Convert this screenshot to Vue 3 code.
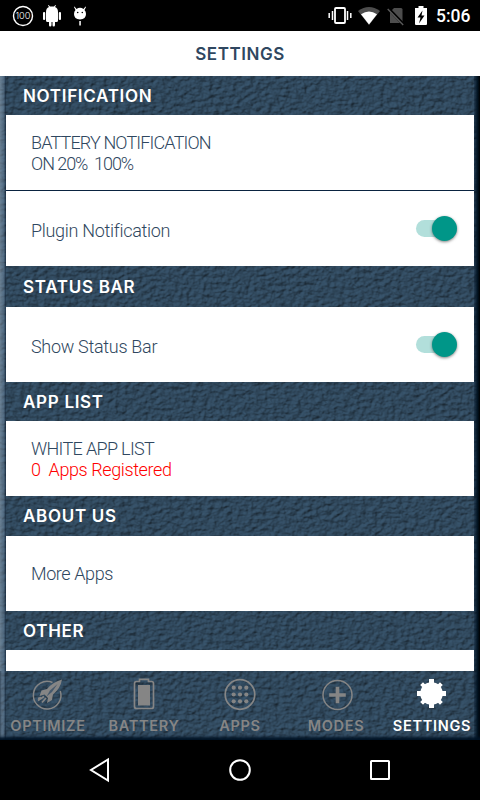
<script setup>
import { ref } from 'vue'

const activeTab = ref('SETTINGS')

const sections = ref([
  {
    title: 'NOTIFICATION',
    headHeight: 39,
    rows: [
      { id: 'battery', lines: ['BATTERY NOTIFICATION', 'ON 20%  100%'] },
      { id: 'plugin', lines: ['Plugin Notification'], toggle: true, on: true }
    ]
  },
  {
    title: 'STATUS BAR',
    headHeight: 41,
    rows: [{ id: 'status', lines: ['Show Status Bar'], toggle: true, on: true }]
  },
  {
    title: 'APP LIST',
    headHeight: 39,
    rows: [{ id: 'white', lines: ['WHITE APP LIST', '0  Apps Registered'], alert: true }]
  },
  {
    title: 'ABOUT US',
    headHeight: 40,
    rows: [{ id: 'more', lines: ['More Apps'] }]
  },
  {
    title: 'OTHER',
    headHeight: 39,
    rows: [{ id: 'other', lines: [] }]
  }
])

const tabs = ['OPTIMIZE', 'BATTERY', 'APPS', 'MODES', 'SETTINGS']

const toggleRow = (row) => {
  if (row.toggle) row.on = !row.on
}
</script>

<template>
  <div class="phone">
    <header class="status-bar">
      <div class="status-left">
        <svg width="22" height="22" viewBox="0 0 22 22">
          <circle cx="11" cy="11" r="9.5" fill="none" stroke="#fff" stroke-width="1.4" />
          <text x="11" y="14.4" text-anchor="middle" textLength="15" lengthAdjust="spacingAndGlyphs" font-size="9.5" font-weight="300" fill="#fff" font-family="Inter, sans-serif">100</text>
        </svg>
        <svg width="20" height="22" viewBox="0 0 20 22" fill="#fff">
          <path d="M4 7Q4 3 7 2L6 .5 6.6 0 8 1.6h4L13.400 0l.6.5L13 2q3 1 3 5v8.500q0 1.500-1.500 1.500H13v3q0 1.500-1.300 1.500T10.500 20v-3h-1v3q0 1.500-1.300 1.500T7 20v-3H5.500Q4 17 4 15.500z" />
          <rect x="1" y="7" width="2.200" height="8" rx="1" />
          <rect x="16.800" y="7" width="2.200" height="8" rx="1" />
        </svg>
        <svg width="16" height="22" viewBox="0 0 16 22" fill="#fff">
          <path d="M2.500 1.500 4.500 4Q8 1.500 11.500 4l2-2.500.5.500-1.500 3Q14 6.500 14 9q0 5-6 5.500Q2 14 2 9q0-2.500 1.500-4L2 2z" />
          <rect x="7.300" y="16" width="1.500" height="4.500" />
          <circle cx="5.700" cy="7.500" r=".8" fill="#000" />
          <circle cx="10.300" cy="7.500" r=".8" fill="#000" />
        </svg>
      </div>
      <div class="status-right">
        <svg class="vibrate" width="24" height="20" viewBox="0 0 24 20" fill="none" stroke="#fff">
          <rect x="7" y="2" width="10" height="15" rx="1" stroke-width="1.800" />
          <path d="M4.500 5v9M1.200 7v5M19.500 5v9M22.800 7v5" stroke-width="1.500" />
        </svg>
        <svg class="wifi" width="22" height="18" viewBox="0 0 22 18">
          <path d="M0 4Q11-4 22 4L11 18z" fill="#4d4d4d" />
          <path d="M3 7.300Q11 1.500 19 7.300L11 17.500z" fill="#fff" />
        </svg>
        <svg class="sim" width="18" height="20" viewBox="0 0 18 20">
          <path d="M7 2h7q1.500 0 1.500 1.500V17H3V6z" fill="#4d4d4d" />
          <path d="M1 2l16 17" stroke="#000" stroke-width="3" />
          <path d="M.7 3l15.500 16" stroke="#5a5a5a" stroke-width="1.400" />
        </svg>
        <svg class="charge" width="12" height="20" viewBox="0 0 12 20">
          <path d="M3.500 0h5v2H12v16q0 1-1 1H1q-1 0-1-1V2h3.500z" fill="#fff" />
          <path d="M7.500 4.500 2.500 11.500h3l-1.500 6 5.500-8h-3z" fill="#000" />
        </svg>
        <span class="clock">5:06</span>
      </div>
    </header>

    <div class="title-bar"><h1>SETTINGS</h1></div>

    <main class="body">
      <!-- Embossed leather backdrop -->
      <svg class="texture" width="480" height="664">
        <defs>
          <filter id="leather" x="0" y="0" width="100%" height="100%" color-interpolation-filters="sRGB">
            <feTurbulence type="fractalNoise" baseFrequency="0.17 0.24" numOctaves="4" seed="21" result="noise" />
            <feDiffuseLighting in="noise" surfaceScale="1.5" diffuseConstant="1.1" lighting-color="#344e64">
              <feDistantLight azimuth="225" elevation="58" />
            </feDiffuseLighting>
          </filter>
        </defs>
        <rect width="480" height="664" filter="url(#leather)" />
      </svg>
      <div class="edge edge-left"></div>
      <div class="edge edge-right"></div>

      <div class="settings-list">
        <section v-for="section in sections" :key="section.title">
          <h2 :style="{ height: section.headHeight + 'px' }">{{ section.title }}</h2>
          <div class="rows">
            <div v-for="row in section.rows" :key="row.id" class="row" @click="toggleRow(row)">
              <div class="label" :class="[row.id, { alert: row.alert, single: row.lines.length === 1 }]">
                <p v-for="line in row.lines" :key="line">{{ line }}</p>
              </div>
              <span v-if="row.toggle" class="switch" :class="{ on: row.on }"><i></i></span>
            </div>
          </div>
        </section>
      </div>

      <nav class="tabs">
        <button v-for="tab in tabs" :key="tab" type="button" :class="{ active: activeTab === tab }" @click="activeTab = tab">
          <svg width="34" height="34" viewBox="0 0 34 34" fill="none" stroke="currentColor">
            <template v-if="tab === 'OPTIMIZE'">
              <path d="M21.500 4.500A13.800 13.800 0 1 0 29.300 13" stroke-width="1.500" />
              <path d="M31 1.500Q21 4.500 16 11L10.500 12.500 8.500 18l5-1.500 3.500 3.500-1 5 5-3 1-5.500Q29.500 10.500 31 1.500z" fill="currentColor" stroke="none" />
              <path d="M13 18.500 7 22.500M15 20l-4 4.500M10 19.500l-3 1" stroke-width="1.800" />
              <path d="M15.500 18.500 19 12.500 26.500 6 21 14z" fill="#304b65" stroke="none" opacity=".75" />
            </template>
            <template v-else-if="tab === 'BATTERY'">
              <path d="M12.500 3.500V1.300h9v2.200h3q2 0 2 2v23q0 2-2 2h-15q-2 0-2-2v-23q0-2 2-2z" stroke-width="1.700" />
              <rect x="11" y="7" width="12" height="20.500" fill="currentColor" stroke="none" />
            </template>
            <template v-else-if="tab === 'APPS'">
              <circle cx="17" cy="16.500" r="14.800" stroke-width="1.700" />
              <g fill="currentColor" stroke="none">
                <circle v-for="n in 9" :key="n" :cx="10.7 + ((n - 1) % 3) * 6.3" :cy="9.7 + Math.floor((n - 1) / 3) * 6.8" r="2.100" />
              </g>
            </template>
            <template v-else-if="tab === 'MODES'">
              <circle cx="18.500" cy="17" r="14.500" stroke-width="1.500" />
              <path d="M18.500 8.700v16.600M10.200 17h16.600" stroke-width="3.700" />
            </template>
            <template v-else>
              <circle cx="16.500" cy="15.500" r="11.300" fill="currentColor" stroke="none" />
              <path d="M16.500 1v29M2 15.500h29" stroke-width="5" />
              <path d="M6.600 5.600l19.800 19.800M26.400 5.600 6.600 25.400" stroke-width="4" />
            </template>
          </svg>
          <span>{{ tab }}</span>
        </button>
      </nav>
    </main>

    <footer class="nav-bar">
      <svg width="22" height="26" viewBox="0 0 22 26"><path d="M19 2.500v21L2 13z" /></svg>
      <svg width="24" height="24" viewBox="0 0 24 24"><circle cx="12" cy="12" r="9.800" /></svg>
      <svg width="22" height="22" viewBox="0 0 22 22"><rect x="2" y="2" width="18" height="18" rx=".5" /></svg>
    </footer>
  </div>
</template>

<style>
body {
  background: #000;
  overflow: hidden;
}
</style>

<style scoped>
.phone {
  width: 480px;
  height: 800px;
  display: flex;
  flex-direction: column;
  background: #000;
  font-family: Roboto, "Open Sans", sans-serif;
  overflow: hidden;
}

.status-bar {
  height: 31px;
  flex: none;
  display: flex;
  justify-content: space-between;
  align-items: center;
  padding: 0 10px 0 12px;
  box-sizing: border-box;
  color: #fff;
}

.status-left {
  display: flex;
  gap: 8px;
}

.status-left svg:last-child {
  margin-left: 2px;
}

.status-right {
  display: flex;
  align-items: center;
}

.wifi {
  margin-left: 6px;
}

.sim {
  margin-left: 7px;
}

.charge {
  margin: 0 9px 0 10px;
}

.clock {
  font-size: 17.5px;
  font-weight: 500;
  width: 34px;
  white-space: nowrap;
}

.title-bar {
  height: 45px;
  flex: none;
  display: flex;
  align-items: center;
  justify-content: center;
  background: #fff;
}

h1,
h2 {
  margin: 0;
  font-family: Inter, sans-serif;
  font-weight: 600;
  font-size: 17px;
  letter-spacing: 0.7px;
}

h1 {
  color: #2f4760;
  letter-spacing: 0.55px;
}

.body {
  height: 664px;
  flex: none;
  position: relative;
  display: flex;
  flex-direction: column;
  background: #2f4760;
  overflow: hidden;
}

.texture {
  position: absolute;
  top: 0;
  left: 0;
}

.edge {
  position: absolute;
  top: 0;
  bottom: 0;
  width: 6px;
}

.edge-left {
  left: 0;
  background: linear-gradient(90deg, rgba(160, 180, 198, 0.5), rgba(120, 145, 170, 0.4) 65%, rgba(0, 15, 35, 0.5));
}

.edge-right {
  right: 0;
  background: linear-gradient(90deg, rgba(0, 20, 45, 0.3), #021321 60%, #000);
}

.settings-list {
  position: relative;
  height: 595px;
  flex: none;
  overflow: hidden;
  padding: 0 6px;
}

h2 {
  color: #fff;
  display: flex;
  align-items: center;
  padding-left: 17px;
  box-sizing: border-box;
}

.rows {
  display: flex;
  flex-direction: column;
  gap: 1px;
  background: #0a2340;
}

.row {
  height: 75px;
  display: flex;
  align-items: center;
  justify-content: space-between;
  padding: 0 17px 0 25px;
  box-sizing: border-box;
  background: #fff;
}

.label p {
  margin: 0;
  font-size: 18px;
  line-height: 21px;
  font-weight: 340;
  letter-spacing: -0.3px;
  color: #2f4760;
  white-space: pre;
}

.label.battery p {
  letter-spacing: -0.85px;
}

.label.battery p:last-child {
  letter-spacing: -1.05px;
}

.label.white p:first-child {
  letter-spacing: -0.65px;
}

.label.white p:last-child,
.label.more p {
  letter-spacing: -0.4px;
}

.label.single {
  padding-top: 3px;
}

.label.more {
  padding-top: 0;
}

.label.alert p:last-child {
  color: #f00;
}

.switch {
  position: relative;
  width: 42px;
  height: 26px;
  display: flex;
  align-items: center;
}

.switch::before {
  content: "";
  width: 36px;
  height: 17px;
  margin-left: 1px;
  border-radius: 9px;
  background: #b8b8b8;
}

.switch i {
  position: absolute;
  left: 0;
  top: 0;
  width: 25px;
  height: 25px;
  border-radius: 50%;
  background: #f1f1f1;
  box-shadow: 0 1px 3px rgba(0, 0, 0, 0.5);
}

.switch.on::before {
  background: #b2dfdb;
}

.switch.on i {
  left: 17px;
  background: #009688;
}

.tabs {
  position: relative;
  height: 69px;
  flex: none;
  display: flex;
  box-shadow: inset 0 -3px 3px #001326;
}

.tabs button {
  flex: 1;
  min-width: 0;
  border: 0;
  background: none;
  padding: 7px 0 0;
  display: flex;
  flex-direction: column;
  align-items: center;
  gap: 5px;
  color: #858585;
  font-family: Inter, sans-serif;
  font-size: 14.5px;
  line-height: 17px;
  font-weight: 600;
  letter-spacing: 0.7px;
}

.tabs button.active {
  color: #fff;
}

.nav-bar {
  flex: 1;
  display: flex;
  align-items: center;
  justify-content: center;
  gap: 117px;
}

.nav-bar svg {
  fill: none;
  stroke: #fff;
  stroke-width: 2;
}
</style>
